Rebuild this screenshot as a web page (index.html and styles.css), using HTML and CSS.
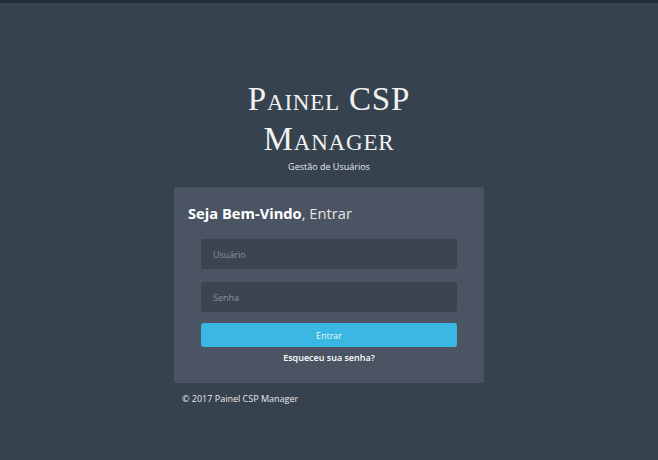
FILE: index.html
```html
<html>

<head>
    <meta charset="utf-8">
    <link rel="stylesheet" href="styles.css">
</head>

<body>
    <div class="topbar"></div>
    <div class="wrapper">
        <header class="brand">
            <h1>Painel CSP<br>Manager</h1>
            <p class="subtitle">Gestão de Usuários</p>
        </header>
        <div class="login_box">
            <h2><b>Seja Bem-Vindo</b>, Entrar</h2>
            <form class="login_form">
                <input type="text" class="field" placeholder="Usuário">
                <input type="password" class="field" placeholder="Senha">
                <button type="button" class="btn_enter">Entrar</button>
                <a href="#" class="forgot">Esqueceu sua senha?</a>
            </form>
        </div>
        <p class="footer">© 2017 Painel CSP Manager</p>
    </div>
</body>

</html>
```

FILE: styles.css
```css
body {
    margin: 0;
    background-color: #37424f;
    font-family: "Open Sans", "Liberation Sans", sans-serif;
    color: #fff;
}

.topbar {
    height: 3px;
    background-color: #252d37;
}

.wrapper {
    width: 310px;
    margin: 0 auto;
    padding-top: 76px;
}

.brand {
    text-align: center;
}

.brand h1 {
    margin: 0;
    font-family: "Liberation Serif", serif;
    font-variant: small-caps;
    font-weight: 400;
    font-size: 33px;
    line-height: 40px;
    letter-spacing: 0.8px;
    color: #f2f2f2;
}

.subtitle {
    margin: 1px 0 0;
    font-size: 9px;
    color: #e8e8e8;
}

.login_box {
    margin-top: 14px;
    padding: 16px 27px 19px;
    background-color: #4a5462;
    border-radius: 3px;
}

.login_box h2 {
    margin: 0 0 16px -13px;
    font-size: 14.7px;
    font-weight: 400;
    color: #e6e6e6;
}

.login_box h2 b {
    font-weight: 700;
    color: #fff;
}

.login_form {
    display: flex;
    flex-direction: column;
    margin: 0;
}

.field {
    height: 30px;
    margin-bottom: 13px;
    padding: 0 12px;
    border: none;
    border-radius: 3px;
    background-color: #3b4450;
    font-family: inherit;
    font-size: 9px;
    color: #ddd;
}

.field::placeholder {
    color: #8b939e;
}

.btn_enter {
    height: 24px;
    margin-top: -2px;
    border: none;
    border-radius: 3px;
    background-color: #3ab7e2;
    font-family: inherit;
    font-size: 9px;
    color: #e8f6fb;
}

.forgot {
    margin-top: 4px;
    text-align: center;
    font-size: 9px;
    font-weight: 600;
    color: #fff;
    text-decoration: none;
}

.footer {
    margin: 9px 0 0 8px;
    font-size: 9px;
    color: #e8e8e8;
}
```
